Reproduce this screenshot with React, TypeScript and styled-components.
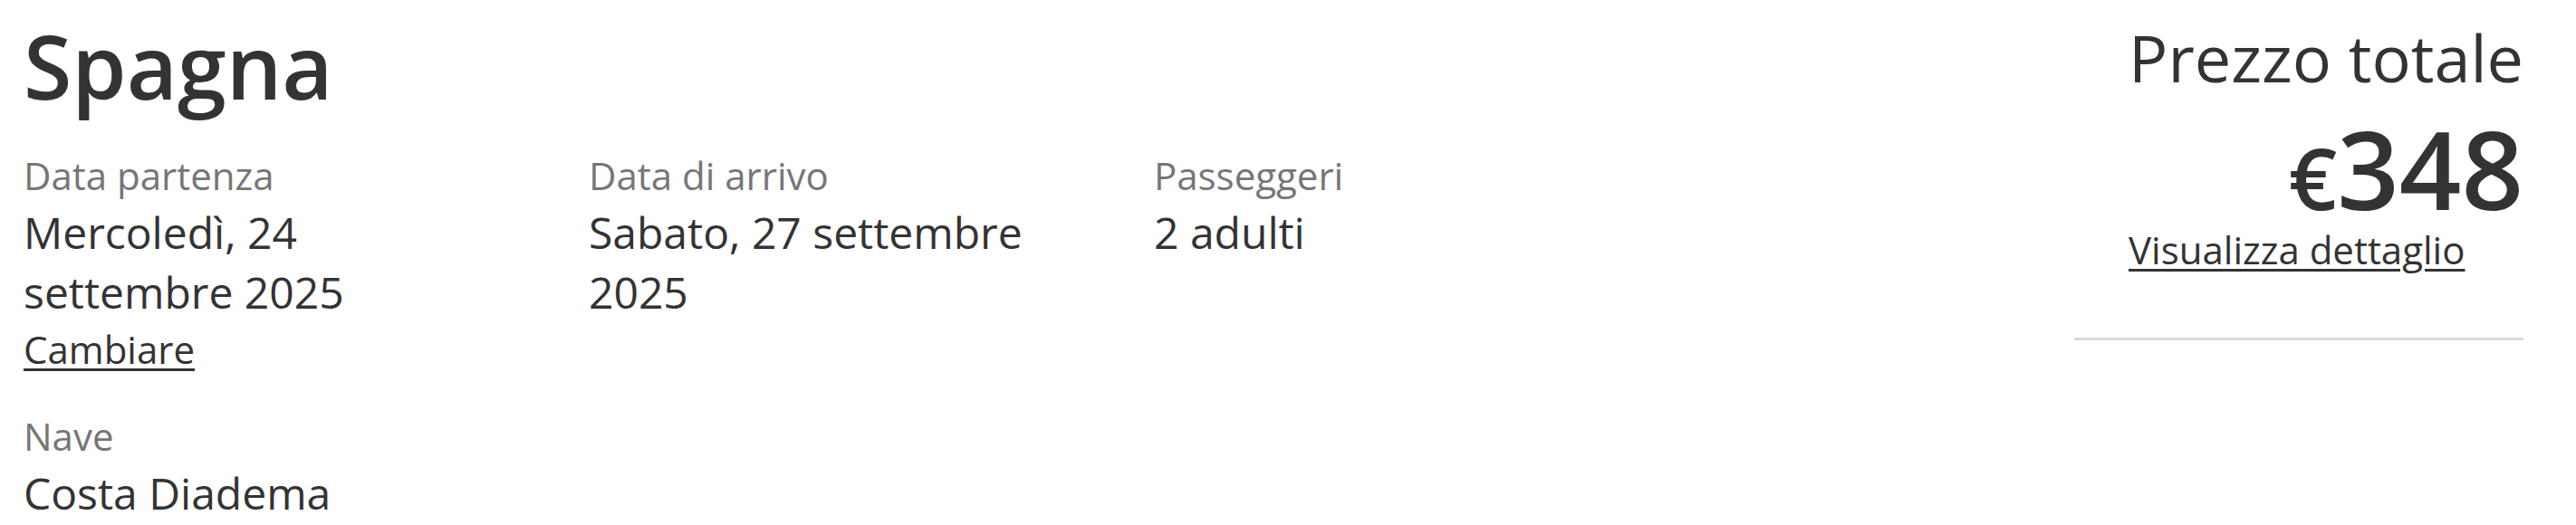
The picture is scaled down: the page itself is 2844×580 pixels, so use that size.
import styled, { createGlobalStyle } from "styled-components";

const GlobalStyle = createGlobalStyle`
    html, body {
        margin: 0;
        padding: 0;
        background: #ffffff;
    }
    body {
        font-family: "Open Sans", "Noto Sans", sans-serif;
        color: #333333;
    }
`

const Page = styled.main`
    display: flex;
    flex-direction: row;
    justify-content: space-between;
    align-items: flex-start;
    box-sizing: border-box;
    width: 2844px;
    padding: 13px 58px 0 26px;
`

const TripInfo = styled.section`
    display: flex;
    flex-direction: column;
`

const Title = styled.h1`
    margin: 0;
    font-size: 97px;
    line-height: 118px;
    font-weight: 600;
    color: #333333;
`

const DetailGrid = styled.div`
    display: grid;
    grid-template-columns: repeat(3, 500px);
    column-gap: 124px;
    row-gap: 36px;
    margin-top: 33px;
`

const Detail = styled.div`
    display: flex;
    flex-direction: column;
    align-items: flex-start;
`

const Label = styled.span`
    font-size: 42px;
    line-height: 60px;
    color: #767676;
`

const Value = styled.span`
    font-size: 48px;
    line-height: 66px;
    color: #333333;
`

const TextLink = styled.a`
    font-size: 42px;
    line-height: 60px;
    color: #333333;
    text-decoration: underline;
    text-decoration-thickness: 3px;
    text-underline-offset: 5px;
    cursor: pointer;
`

const Summary = styled.aside`
    display: flex;
    flex-direction: column;
    align-items: flex-end;
    width: 496px;
    padding-top: 8px;
`

const PriceBox = styled.div`
    display: flex;
    flex-direction: column;
    align-items: flex-end;

    ${TextLink} {
        align-self: flex-start;
    }
`

const PriceTitle = styled.span`
    font-size: 72px;
    line-height: 85px;
    color: #333333;
`

const Price = styled.span`
    margin-top: 20px;
    font-size: 120px;
    line-height: 120px;
    font-weight: 600;
    color: #333333;
`

// smaller euro sign on the amount's baseline
const Currency = styled.span`
    font-size: 94px;
    line-height: 0;
`

const Divider = styled.hr`
    align-self: stretch;
    margin: 67px 0 0;
    border: none;
    height: 3px;
    background: #d9d9d9;
`

type TripDetail = {
    label: string;
    value: string;
    action?: string;
}

const details: TripDetail[] = [
    { label: "Data partenza", value: "Mercoledì, 24 settembre 2025", action: "Cambiare" },
    { label: "Data di arrivo", value: "Sabato, 27 settembre 2025" },
    { label: "Passeggeri", value: "2 adulti" },
    { label: "Nave", value: "Costa Diadema" },
]

const App = () => {
    return (
        <>
            <GlobalStyle />
            <Page>
                <TripInfo>
                    <Title>Spagna</Title>
                    <DetailGrid>
                        {
                            details.map((detail) => (
                                <Detail key={detail.label}>
                                    <Label>{detail.label}</Label>
                                    <Value>{detail.value}</Value>
                                    {detail.action ? <TextLink>{detail.action}</TextLink> : null}
                                </Detail>
                            ))
                        }
                    </DetailGrid>
                </TripInfo>

                <Summary>
                    <PriceBox>
                        <PriceTitle>Prezzo totale</PriceTitle>
                        <Price><Currency>€</Currency>348</Price>
                        <TextLink>Visualizza dettaglio</TextLink>
                    </PriceBox>
                    <Divider />
                </Summary>
            </Page>
        </>
    );
}

export default App;
